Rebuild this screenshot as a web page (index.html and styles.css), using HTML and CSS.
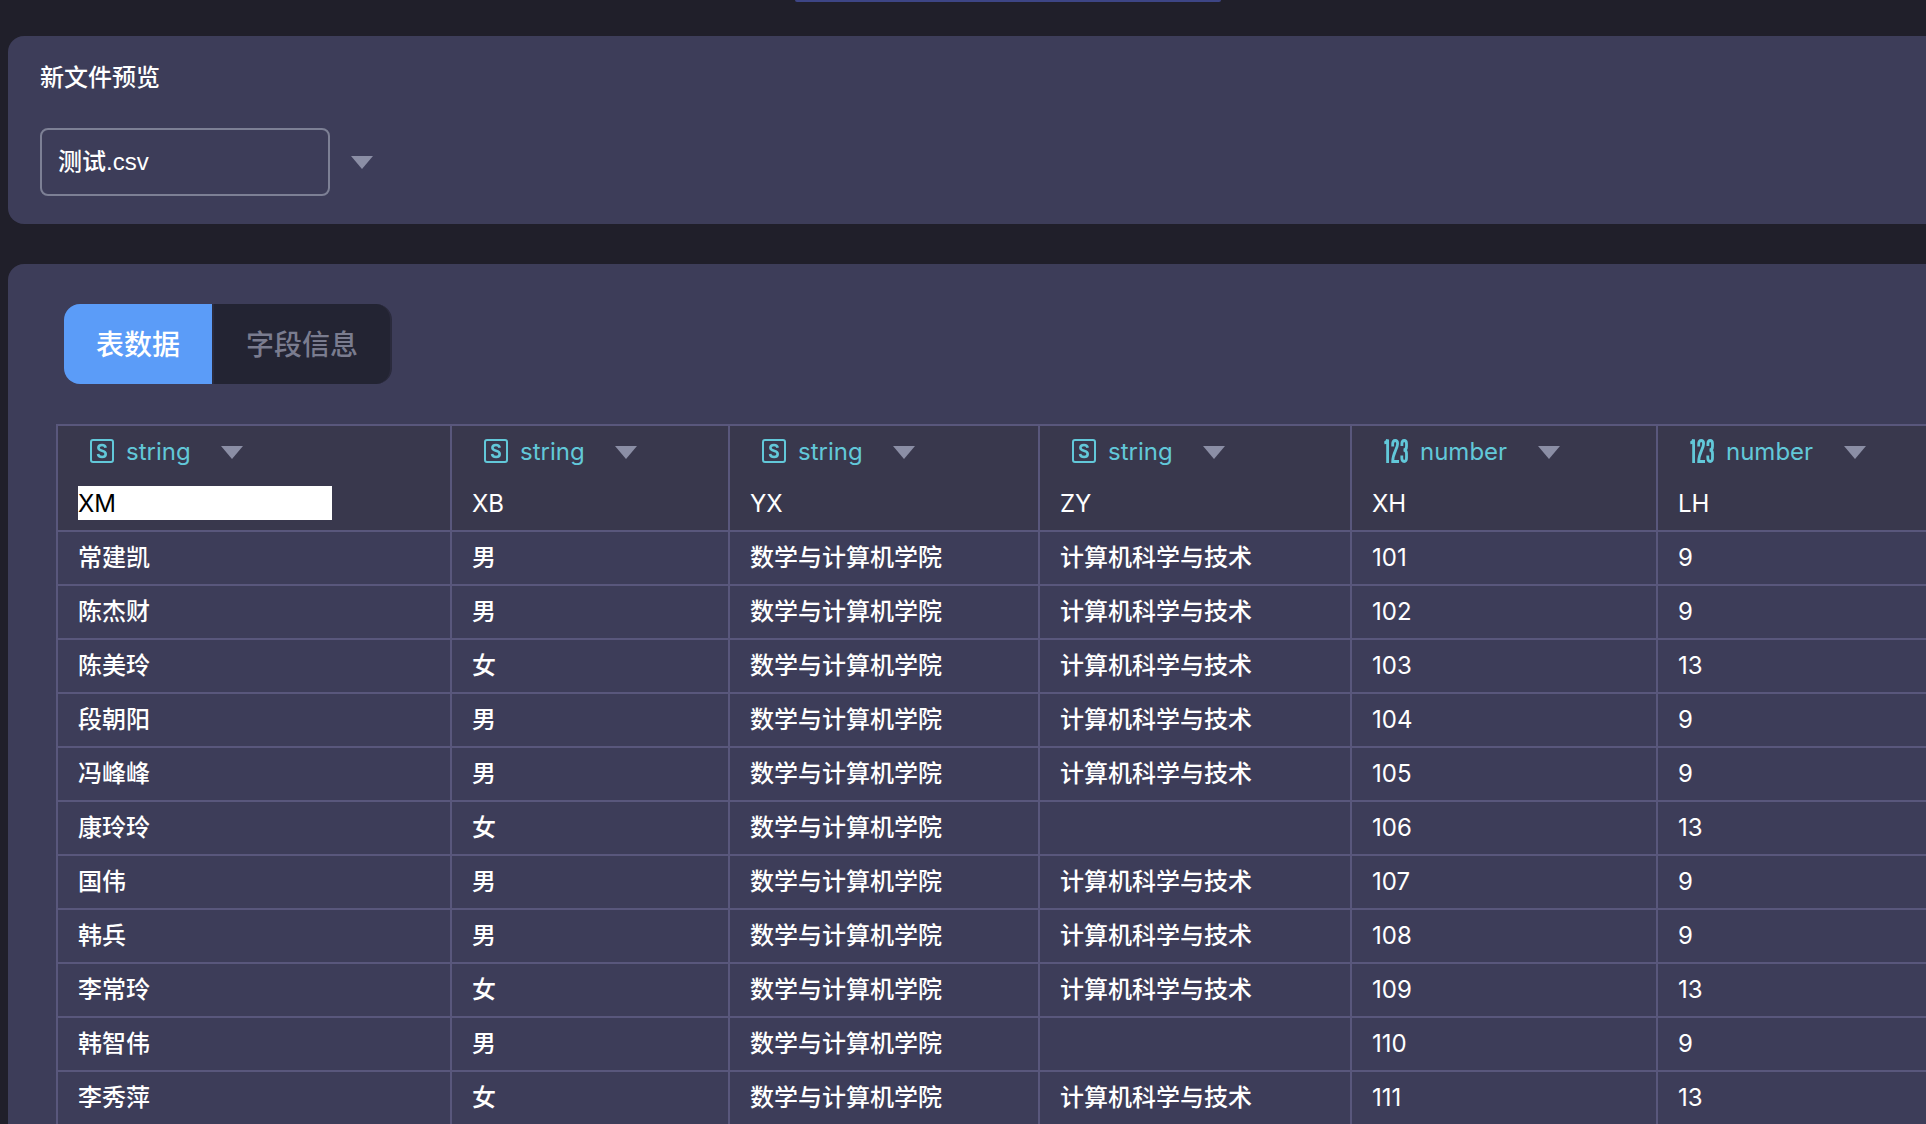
FILE: index.html
```html
<!DOCTYPE html>
<html lang="zh-CN">
<head>
<meta charset="utf-8">
<title>新文件预览</title>
<link rel="stylesheet" href="styles.css">
</head>
<body>
<svg class="sprite" aria-hidden="true">
  <symbol id="icon-string" viewBox="0 0 24 24">
    <rect x="1" y="1" width="22" height="22" rx="2" fill="none" stroke="currentColor" stroke-width="2"/>
    <path d="M15.700 8.800C15.400 6.900 14.100 6 12 6C9.800 6 8.400 7.100 8.400 8.800C8.400 10.500 9.600 11.100 12 11.700C14.500 12.300 15.700 13 15.700 15C15.700 17 14.300 18 12.100 18C9.700 18 8.300 17 8 15" fill="none" stroke="currentColor" stroke-width="2.600"/>
  </symbol>
  <symbol id="icon-number" viewBox="0 0 24 24">
    <path d="M.3 3.800C2 3.600 3 2.600 3.600 .5V24M8.700 7.500V4.700C8.700 2.600 9.500 1.500 11.200 1.500S13.600 2.600 13.600 4.700C13.600 9.500 8.700 14 8.700 22.500H15M17.900 7V4.700C17.900 2.600 18.600 1.500 20.200 1.500S22.500 2.600 22.500 4.700V7.500C22.500 9.800 21.700 11 19.500 11C21.700 11 22.500 12.300 22.500 14.500V19.100C22.500 21.300 21.800 22.500 20.200 22.500S17.800 21.300 17.800 19.100V16.500" fill="none" stroke="currentColor" stroke-width="2.800"/>
  </symbol>
  <symbol id="icon-caret" viewBox="0 0 22 13">
    <path d="M0 0H22L11 13Z" fill="currentColor"/>
  </symbol>
</svg>

<header class="top"><div class="upload"></div></header>

<main>
  <section class="panel preview">
    <h1 class="title"><label for="file">新文件预览</label></h1>
    <div class="picker">
      <select class="file" id="file"><option>测试.csv</option></select>
      <svg class="caret"><use href="#icon-caret"/></svg>
    </div>
  </section>

  <section class="panel data">
    <div class="tabs" role="tablist">
      <button class="tab active" role="tab" aria-selected="true">表数据</button>
      <button class="tab" role="tab" aria-selected="false">字段信息</button>
    </div>
    <table class="grid">
      <colgroup><col class="c1"><col class="c2"><col class="c3"><col class="c4"><col class="c5"><col></colgroup>
      <thead>
        <tr>
          <th><div class="type"><svg class="icon"><use href="#icon-string"/></svg><select aria-label="XM 类型"><option>string</option></select><svg class="caret"><use href="#icon-caret"/></svg></div><input class="name editing" aria-label="字段 1" value="XM"></th>
          <th><div class="type"><svg class="icon"><use href="#icon-string"/></svg><select aria-label="XB 类型"><option>string</option></select><svg class="caret"><use href="#icon-caret"/></svg></div><input class="name" aria-label="字段 2" value="XB"></th>
          <th><div class="type"><svg class="icon"><use href="#icon-string"/></svg><select aria-label="YX 类型"><option>string</option></select><svg class="caret"><use href="#icon-caret"/></svg></div><input class="name" aria-label="字段 3" value="YX"></th>
          <th><div class="type"><svg class="icon"><use href="#icon-string"/></svg><select aria-label="ZY 类型"><option>string</option></select><svg class="caret"><use href="#icon-caret"/></svg></div><input class="name" aria-label="字段 4" value="ZY"></th>
          <th><div class="type"><svg class="icon"><use href="#icon-number"/></svg><select aria-label="XH 类型"><option>number</option></select><svg class="caret"><use href="#icon-caret"/></svg></div><input class="name" aria-label="字段 5" value="XH"></th>
          <th><div class="type"><svg class="icon"><use href="#icon-number"/></svg><select aria-label="LH 类型"><option>number</option></select><svg class="caret"><use href="#icon-caret"/></svg></div><input class="name" aria-label="字段 6" value="LH"></th>
        </tr>
      </thead>
      <tbody>
        <tr><td>常建凯</td><td>男</td><td>数学与计算机学院</td><td>计算机科学与技术</td><td class="num">101</td><td class="num">9</td></tr>
        <tr><td>陈杰财</td><td>男</td><td>数学与计算机学院</td><td>计算机科学与技术</td><td class="num">102</td><td class="num">9</td></tr>
        <tr><td>陈美玲</td><td>女</td><td>数学与计算机学院</td><td>计算机科学与技术</td><td class="num">103</td><td class="num">13</td></tr>
        <tr><td>段朝阳</td><td>男</td><td>数学与计算机学院</td><td>计算机科学与技术</td><td class="num">104</td><td class="num">9</td></tr>
        <tr><td>冯峰峰</td><td>男</td><td>数学与计算机学院</td><td>计算机科学与技术</td><td class="num">105</td><td class="num">9</td></tr>
        <tr><td>康玲玲</td><td>女</td><td>数学与计算机学院</td><td></td><td class="num">106</td><td class="num">13</td></tr>
        <tr><td>国伟</td><td>男</td><td>数学与计算机学院</td><td>计算机科学与技术</td><td class="num">107</td><td class="num">9</td></tr>
        <tr><td>韩兵</td><td>男</td><td>数学与计算机学院</td><td>计算机科学与技术</td><td class="num">108</td><td class="num">9</td></tr>
        <tr><td>李常玲</td><td>女</td><td>数学与计算机学院</td><td>计算机科学与技术</td><td class="num">109</td><td class="num">13</td></tr>
        <tr><td>韩智伟</td><td>男</td><td>数学与计算机学院</td><td></td><td class="num">110</td><td class="num">9</td></tr>
        <tr><td>李秀萍</td><td>女</td><td>数学与计算机学院</td><td>计算机科学与技术</td><td class="num">111</td><td class="num">13</td></tr>
      </tbody>
    </table>
  </section>
</main>
</body>
</html>
```
FILE: styles.css
```css
* { box-sizing: border-box; }

body {
  margin: 0;
  background: #201f2a;
  color: #fff;
  font: 500 24px/34px Inter, "Noto Sans CJK SC", sans-serif;
}

.sprite { display: none; }

select, input, button {
  margin: 0;
  padding: 0;
  border: 0;
  background: none;
  color: inherit;
  font: inherit;
  appearance: none;
  outline: none;
}

.top {
  display: flex;
  justify-content: center;
  height: 36px;
  padding-left: 90px;
}

.upload {
  width: 426px;
  height: 2px;
  border-radius: 0 0 4px 4px;
  background: #3d4585;
}

.panel {
  margin-left: 8px;
  background: #3d3d59;
}

.preview {
  padding: 25px 32px 28px;
  border-radius: 16px 0 0 16px;
}

.title {
  margin: 0 0 33px;
  font-size: 24px;
  font-weight: 500;
}

.picker {
  display: flex;
  align-items: center;
  gap: 21px;
}

.file {
  width: 290px;
  height: 68px;
  padding: 0 16px;
  border: 2px solid #7d8095;
  border-radius: 8px;
  font-family: "Liberation Sans", "Noto Sans CJK SC", sans-serif;
}

.caret {
  width: 22px;
  height: 13px;
  color: #8b8ea5;
}

.data {
  margin-top: 40px;
  padding: 40px 0 0 48px;
  border-radius: 16px 0 0 0;
}

.tabs {
  display: flex;
  margin: 0 0 40px 8px;
}

.tab {
  height: 80px;
  padding: 2px 32px 0;
  border: 2px solid #2b2b3d;
  border-width: 0 2px;
  border-radius: 0 16px 16px 0;
  background: #232433;
  color: #7a7c8f;
  font-size: 28px;
}

.tab.active {
  border-width: 0;
  border-radius: 16px 0 0 16px;
  background: #5b9cf8;
  color: #fff;
}

.grid {
  width: 100%;
  table-layout: fixed;
  border-spacing: 0;
}

.c1 { width: 394px; }
.c2 { width: 278px; }
.c3 { width: 310px; }
.c4 { width: 312px; }
.c5 { width: 306px; }

th, td {
  height: 54px;
  padding: 0 20px;
  border: 2px solid #59577c;
  border-width: 2px 0 0 2px;
  text-align: left;
  font-weight: 500;
}

th {
  padding-bottom: 10px;
  background: #39384d;
  font-weight: 400;
}

.num { font-weight: 400; }

.type {
  display: flex;
  align-items: center;
  height: 50px;
  margin-bottom: 10px;
  padding-left: 12px;
  color: #62c8d9;
}

.type select { padding-top: 2px; }

.icon {
  width: 24px;
  height: 24px;
  margin-right: 12px;
}

.type .caret {
  margin-top: 2px;
  margin-left: 30px;
}

.name {
  display: block;
  width: 254px;
  max-width: 100%;
  height: 34px;
  padding-top: 2px;
}

.name.editing {
  background: #fff;
  color: #000;
}
```
